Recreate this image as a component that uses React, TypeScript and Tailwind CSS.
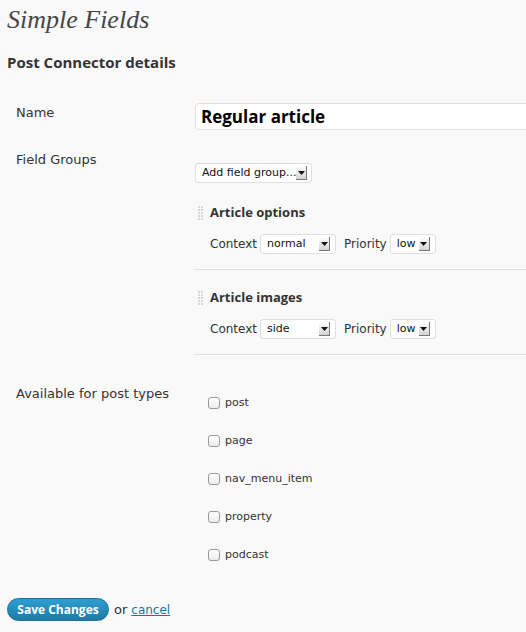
import React from "react";

const sans = { fontFamily: '"DejaVu Sans", "Lucida Grande", Verdana, sans-serif' };
const bold = { fontFamily: '"Open Sans", "DejaVu Sans", sans-serif' };

function Arrow() {
  return (
    <span className="ml-auto flex h-[14px] w-[11px] shrink-0 items-center justify-center border-r border-b border-r-[#777] border-b-[#777] bg-gradient-to-b from-[#ffffff] to-[#d4d4d4]">
      <svg width="7" height="4" viewBox="0 0 7 4"><path d="M0 0h7L3.5 4z" fill="#111" /></svg>
    </span>
  );
}

function Select({ value, w }: { value: string; w: string }) {
  return (
    <div className={`flex h-[20px] items-center whitespace-nowrap rounded-[3px] border border-[#dfdfdf] bg-white pl-[6px] pr-[5px] text-[11px] text-[#111] ${w}`}>
      <span>{value}</span>
      <Arrow />
    </div>
  );
}

function Handle() {
  return (
    <svg width="6" height="15" viewBox="0 0 6 15" className="mr-[6px]">
      {[0, 3, 6, 9, 12].map((y) => (
        <g key={y}>
          <rect x="0" y={y} width="2" height="2" fill="#d6d6d6" />
          <rect x="3" y={y} width="2" height="2" fill="#d6d6d6" />
        </g>
      ))}
    </svg>
  );
}

function Group({ title, context }: { title: string; context: string }) {
  return (
    <div className="border-b border-[#dfdfdf]">
      <div className="flex h-[20px] items-center pl-[4px]">
        <Handle />
        <span className="text-[13px] font-bold text-[#333]" style={bold}>{title}</span>
      </div>
      <div className="mt-[11px] flex items-center pl-[16px] pb-[15px] text-[12px] text-[#333]">
        <span className="mr-[3px]">Context</span>
        <Select value={context} w="w-[76px]" />
        <span className="ml-[8px] mr-[3px]">Priority</span>
        <Select value="low" w="w-[46px]" />
      </div>
    </div>
  );
}

export default function App() {
  const types = ["post", "page", "nav_menu_item", "property", "podcast"];
  return (
    <div className="min-h-[632px] overflow-hidden bg-[#f9f9f9] px-[7px] text-[#333]" style={sans}>
      <h2
        className="flex h-[38px] items-center text-[26px] italic text-[#464646]"
        style={{ fontFamily: '"Liberation Serif", Georgia, serif' }}
      >
        Simple Fields
      </h2>
      <h3 className="mt-[9px] flex h-[30px] items-center text-[15px] font-bold text-[#333]" style={bold}>
        Post Connector details
      </h3>

      {/* Name */}
      <div className="mt-[26px] flex">
        <div className="w-[188px] shrink-0 pl-[9px] text-[13px] leading-[20px]">Name</div>
        <div
          className="flex h-[27px] w-[340px] shrink-0 items-center rounded-[4px] border border-[#dfdfdf] bg-white pl-[5px] text-[17px] font-bold text-black"
          style={bold}
        >
          Regular article
        </div>
      </div>

      {/* Field groups */}
      <div className="mt-[20px] flex">
        <div className="w-[188px] shrink-0 pl-[9px] text-[13px] leading-[20px]">Field Groups</div>
        <div className="-mr-[7px] flex-1">
          <div className="mt-[13px]">
            <Select value="Add field group..." w="w-[117px]" />
          </div>
          <div className="mt-[20px] ml-[-1px]">
            <Group title="Article options" context="normal" />
            <div className="mt-[18px]">
              <Group title="Article images" context="side" />
            </div>
          </div>
        </div>
      </div>

      {/* Post types */}
      <div className="mt-[29px] flex">
        <div className="w-[188px] shrink-0 pl-[9px] text-[13px] leading-[20px]">Available for post types</div>
        <div>
          {types.map((t) => (
            <div key={t} className="flex h-[38px] items-center pl-[13px] text-[11px] text-[#333]">
              <span className="mr-[5px] h-[12px] w-[12px] rounded-[3px] border border-[#9a9a9a] bg-gradient-to-b from-[#ffffff] to-[#ececec]" />
              <span>{t}</span>
            </div>
          ))}
        </div>
      </div>

      {/* Buttons */}
      <div className="mt-[24px] flex items-center text-[13px]">
        <button
          className="flex h-[23px] w-[102px] items-center justify-center rounded-full border border-[#1b6f95] bg-gradient-to-b from-[#2e9fd2] to-[#1f7aa6] text-[12px] font-bold text-white"
          style={bold}
        >
          Save Changes
        </button>
        <span className="ml-[5px] text-[#333]">or</span>
        <a className="ml-[4px] text-[12px] text-[#21759b] underline">cancel</a>
      </div>
    </div>
  );
}
